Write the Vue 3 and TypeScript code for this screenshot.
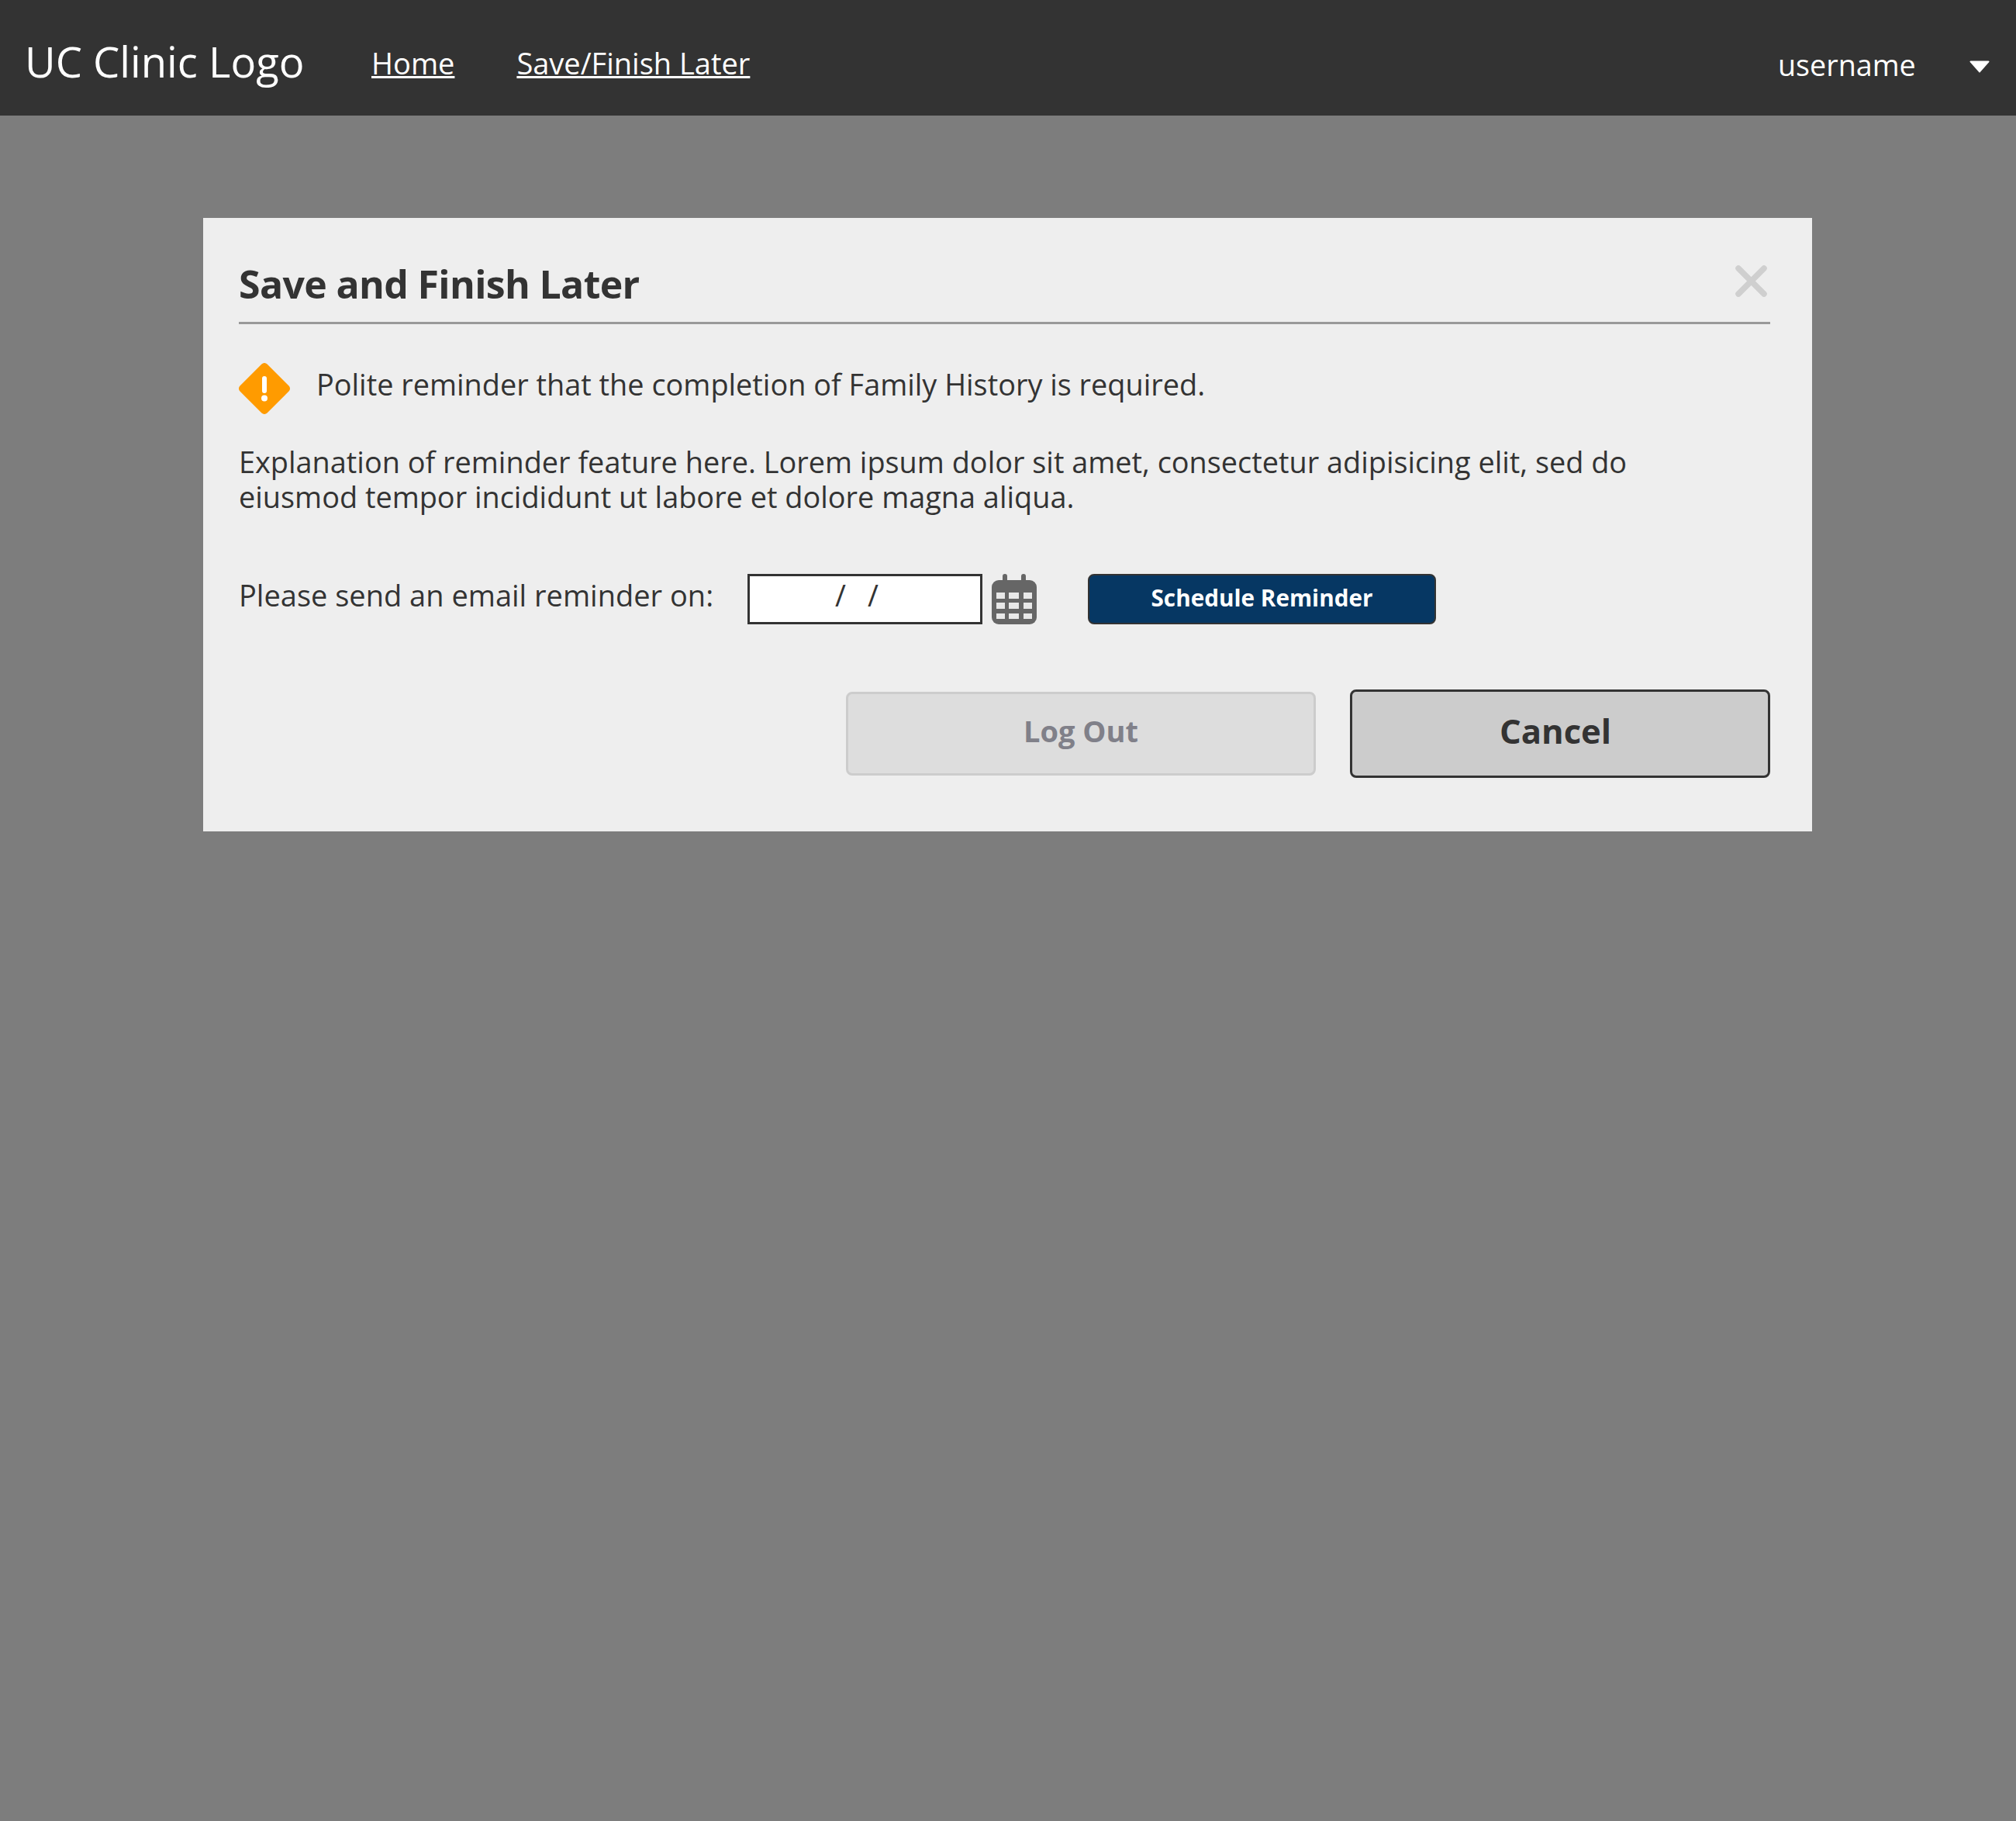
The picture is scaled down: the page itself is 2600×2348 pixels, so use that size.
<script setup lang="ts">
const cols: [number, number][] = [[6, 11], [22, 13], [41, 11]];
const rows: [number, number][] = [[24, 8], [37, 8], [51, 7]];
const cells = rows.flatMap((r) => cols.map((c) => ({ x: c[0], w: c[1], y: r[0], h: r[1] })));
</script>

<template>
  <div class="page">
    <header class="topbar">
      <div class="logo">UC Clinic Logo</div>
      <nav class="nav">
        <a class="nav-link" href="#">Home</a>
        <a class="nav-link" href="#">Save/Finish Later</a>
      </nav>
      <div class="user">
        <span class="username">username</span>
        <svg class="caret" width="26" height="16" viewBox="0 0 26 16"><path d="M1.500 0.500h23a1 1 0 0 1 .8 1.600L13.800 15a1 1 0 0 1-1.600 0L.7 2.100a1 1 0 0 1 .8-1.600z" fill="#fff" /></svg>
      </div>
    </header>
    <main class="stage">
      <section class="modal">
        <svg class="close" width="41" height="41" viewBox="0 0 41 41"><path d="M4 4L37 37M37 4L4 37" stroke="#cfcfcf" stroke-width="7.500" stroke-linecap="round" fill="none" /></svg>
        <h1 class="title">Save and Finish Later</h1>
        <div class="notice">
          <svg class="warn" width="66" height="66" viewBox="0 0 66 66">
            <rect x="8.200" y="8.200" width="49.600" height="49.600" rx="5" transform="rotate(45 33 33)" fill="#ff9b00" />
            <rect x="30" y="17" width="6" height="22" rx="3" fill="#fff" />
            <circle cx="33" cy="45.500" r="4" fill="#fff" />
          </svg>
          <p class="notice-text">Polite reminder that the completion of Family History is required.</p>
        </div>
        <p class="explain">Explanation of reminder feature here. Lorem ipsum dolor sit amet, consectetur adipisicing elit, sed do eiusmod tempor incididunt ut labore et dolore magna aliqua.</p>
        <div class="reminder">
          <span class="reminder-label">Please send an email reminder on:</span>
          <div class="date-input"><span>/</span><span>/</span></div>
          <svg class="cal" width="58" height="65" viewBox="0 0 58 65">
            <rect x="14" y="0" width="6" height="14" rx="3" fill="#666" />
            <rect x="38" y="0" width="6" height="14" rx="3" fill="#666" />
            <rect x="0" y="8" width="58" height="57" rx="9" fill="#666" />
            <rect v-for="(c, i) in cells" :key="i" :x="c.x" :y="c.y" :width="c.w" :height="c.h" fill="#e8e8e8" />
          </svg>
          <button class="schedule" type="button">Schedule Reminder</button>
        </div>
        <div class="actions">
          <button class="btn logout" type="button">Log Out</button>
          <button class="btn cancel" type="button">Cancel</button>
        </div>
      </section>
    </main>
  </div>
</template>

<style scoped>
.page {
  min-height: 2348px;
  background: #7d7d7d;
  font-family: "Open Sans", "Noto Sans", sans-serif;
  color: #333;
}
.topbar {
  height: 149px;
  box-sizing: border-box;
  background: #333;
  color: #fff;
  display: flex;
  align-items: flex-start;
  padding-left: 32px;
}
.logo {
  font-size: 54.400px;
  line-height: 74px;
  margin-top: 42px;
  width: 447px;
}
.nav {
  display: flex;
  gap: 80px;
  margin-top: 56px;
}
.nav-link {
  color: #fff;
  font-size: 38px;
  line-height: 50px;
  text-decoration: underline;
}
.user {
  margin-left: auto;
  display: flex;
  align-items: center;
  padding-right: 34px;
  margin-top: 59px;
}
.username {
  font-size: 37.700px;
  line-height: 50px;
  width: 247px;
}
.caret {
  margin-top: 3px;
}
.stage {
  padding: 132px 263px 0 262px;
}
.modal {
  position: relative;
  height: 791px;
  box-sizing: border-box;
  background: #eee;
  padding: 43px 54px 0 46px;
}
.close {
  position: absolute;
  right: 58px;
  top: 61px;
}
.title {
  margin: 0;
  font-size: 50px;
  letter-spacing: -0.650px;
  line-height: 85px;
  font-weight: 700;
  color: #333;
  border-bottom: 3px solid #999;
  padding-bottom: 6px;
}
.notice {
  display: flex;
  align-items: center;
  gap: 34px;
  margin-top: 50px;
}
.notice-text {
  margin: 0 0 12px;
  font-size: 37.870px;
  line-height: 45px;
}
.explain {
  margin: 39px 0 0;
  font-size: 37.870px;
  line-height: 45px;
  max-width: 1900px;
}
.reminder {
  display: flex;
  align-items: center;
  margin-top: 77px;
}
.reminder-label {
  font-size: 38px;
  line-height: 45px;
  width: 656px;
  margin-bottom: 11px;
}
.date-input {
  width: 303px;
  height: 65px;
  box-sizing: border-box;
  border: 3px solid #333;
  background: #fff;
  display: flex;
  justify-content: center;
  align-items: center;
  gap: 28px;
  font-size: 38px;
  line-height: 45px;
  padding-bottom: 10px;
  padding-right: 21px;
}
.cal {
  margin-left: 12px;
}
.schedule {
  margin-left: 66px;
  width: 449px;
  height: 65px;
  box-sizing: border-box;
  background: #063763;
  color: #fff;
  border: 2px solid #333;
  border-radius: 8px;
  font-family: inherit;
  font-size: 29.700px;
  font-weight: 700;
  padding: 0 0 4px;
}
.actions {
  display: flex;
  justify-content: flex-end;
  align-items: center;
  gap: 44px;
  margin-top: 84px;
}
.btn {
  box-sizing: border-box;
  font-family: inherit;
  font-weight: 700;
  border-radius: 8px;
}
.logout {
  width: 606px;
  height: 108px;
  background: #ddd;
  border: 3px solid #ccc;
  color: #808089;
  font-size: 38px;
  padding: 0 0 8px;
}
.cancel {
  width: 542px;
  height: 114px;
  background: #ccc;
  border: 3px solid #333;
  color: #333;
  font-size: 43.600px;
  padding: 0 12px 8px 0;
}
</style>

<style>
html, body { background: #7d7d7d; }
</style>
